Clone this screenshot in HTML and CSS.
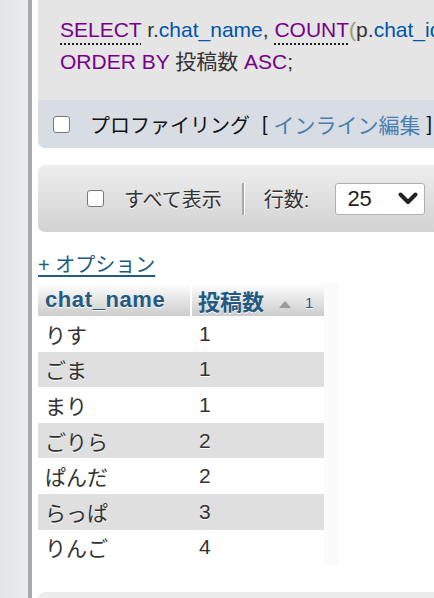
FILE: index.html
```html
<!DOCTYPE html>
<html lang="ja">
<head>
<meta charset="utf-8">
<title>phpMyAdmin</title>
<link rel="stylesheet" href="styles.css">
</head>
<body>
<div class="page">
  <div class="sidebar"></div>
  <div class="divider"></div>
  <div class="main">
    <div class="sqlbox">
      <div class="code-line"><span class="kw dotted">SELECT</span> <span class="plain">r.</span><span class="var">chat_name</span><span class="plain">,</span> <span class="kw dotted">COUNT</span><span class="br">(</span><span class="plain">p.</span><span class="var">chat_id</span><span class="br">)</span> <span class="kw">AS</span> <span class="plain">投稿数</span></div>
      <div class="code-line"><span class="kw">ORDER BY</span> <span class="plain">投稿数</span> <span class="kw">ASC</span><span class="plain">;</span></div>
    </div>
    <div class="tools">
      <span class="checkbox"></span>
      <span class="tools-text">プロファイリング</span>
      <span class="bracket">[</span>
      <a class="tool-link">インライン編集</a>
      <span class="bracket">]</span>
    </div>
    <div class="navbar">
      <span class="checkbox"></span>
      <span class="nav-label">すべて表示</span>
      <span class="nav-sep"></span>
      <span class="nav-label">行数:</span>
      <div class="select">
        <span class="select-value">25</span>
        <svg class="chevron" width="20" height="13" viewBox="0 0 20 13"><path d="M2.5 2.5 L10 10 L17.5 2.5" fill="none" stroke="#222" stroke-width="4" stroke-linecap="round" stroke-linejoin="round"/></svg>
      </div>
    </div>
    <div class="options-row"><a class="options">+ オプション</a></div>
    <div class="results">
      <table class="data">
        <thead>
          <tr>
            <th class="col1">chat_name</th>
            <th class="col2">投稿数<svg class="sort" width="12" height="7" viewBox="0 0 12 7"><polygon points="6,0 12,7 0,7" fill="#9a9a9a"/></svg><span class="sort-num">1</span></th>
          </tr>
        </thead>
        <tbody>
          <tr class="odd"><td>りす</td><td>1</td></tr>
          <tr class="even"><td>ごま</td><td>1</td></tr>
          <tr class="odd"><td>まり</td><td>1</td></tr>
          <tr class="even"><td>ごりら</td><td>2</td></tr>
          <tr class="odd"><td>ぱんだ</td><td>2</td></tr>
          <tr class="even"><td>らっぱ</td><td>3</td></tr>
          <tr class="odd"><td>りんご</td><td>4</td></tr>
        </tbody>
      </table>
    </div>
    <div class="bottom-panel"></div>
  </div>
</div>
</body>
</html>
```
FILE: styles.css
```css
html, body {
  margin: 0;
  padding: 0;
  background: #fff;
}
body {
  font-family: "Liberation Sans", "Noto Sans CJK JP", sans-serif;
  color: #333;
  width: 434px;
  height: 598px;
  overflow: hidden;
}
.page {
  display: flex;
  height: 598px;
}
.sidebar {
  width: 28px;
  flex: none;
  background: linear-gradient(to right, #e4e5e6, #ebeced);
}
.divider {
  width: 4px;
  flex: none;
  background: #a9a9a9;
}
.main {
  flex: 1;
  min-width: 0;
  padding-left: 6px;
  overflow: hidden;
}
.sqlbox {
  background: #e5e5e5;
  height: 100px;
  box-sizing: border-box;
  padding: 14px 0 0 22px;
  width: 600px;
}
.code-line {
  font-size: 21px;
  line-height: 32px;
  white-space: nowrap;
}
.kw { color: #708; }
.var { color: #05a; }
.plain { color: #333; }
.br { color: #997; }
.dotted {
  text-decoration: underline dotted #222 2px;
  text-underline-offset: 6px;
}
.tools {
  background: #d8dde4;
  height: 48px;
  border-radius: 0 0 0 7px;
  display: flex;
  align-items: center;
  padding-left: 15px;
  width: 600px;
  white-space: nowrap;
}
.checkbox {
  display: inline-block;
  width: 15px;
  height: 15px;
  border: 1.5px solid #777;
  border-radius: 3px;
  background: #fff;
  flex: none;
}
.tools-text {
  font-size: 20px;
  color: #111;
  margin-left: 20px;
}
.bracket {
  font-size: 20px;
  color: #111;
  margin-left: 12px;
}
.tool-link {
  font-size: 21px;
  color: #4a7fb0;
  margin-left: 6px;
}
.tool-link + .bracket {
  margin-left: 6px;
}
.navbar {
  margin-top: 17px;
  height: 67px;
  border-radius: 7px;
  background: linear-gradient(#eeeeee, #d2d2d2);
  display: flex;
  align-items: center;
  padding-left: 49px;
  width: 600px;
  box-sizing: border-box;
  white-space: nowrap;
}
.nav-label {
  font-size: 20px;
  color: #333;
  text-shadow: 0 1px 0 #fff;
  margin-left: 20px;
}
.nav-sep {
  width: 2px;
  height: 32px;
  background: #a8a8a8;
  box-shadow: 1px 0 0 #fff;
  margin-left: 20px;
}
.select {
  margin-left: 26px;
  width: 90px;
  height: 32px;
  box-sizing: border-box;
  background: #fff;
  border: 1px solid #b0b0b0;
  border-radius: 3px;
  display: flex;
  align-items: center;
  justify-content: space-between;
  padding: 0 6px 0 11px;
}
.select-value {
  font-size: 22px;
  color: #222;
}
.options-row {
  margin-top: 19px;
  line-height: 28px;
  height: 28px;
}
.options {
  font-size: 20px;
  color: #235a81;
  text-decoration: underline;
  text-underline-offset: 3px;
}
.results {
  margin-top: 4px;
  background: #fbfbfb;
  width: 300px;
}
.data {
  border-collapse: collapse;
  width: 286px;
}
.data th {
  background: linear-gradient(#ffffff, #cccccc);
  color: #235a81;
  font-weight: bold;
  font-size: 22px;
  text-align: left;
  height: 33px;
  padding: 0 7px;
  text-shadow: 0 1px 0 #fff;
  white-space: nowrap;
}
.data th.col1 {
  width: 138px;
  letter-spacing: 0.6px;
}
.data th.col2 {
  border-left: 2px solid #fff;
  padding-left: 6px;
}
.sort {
  margin-left: 15px;
  vertical-align: 2px;
}
.sort-num {
  font-size: 15px;
  font-weight: normal;
  margin-left: 14px;
  vertical-align: 2px;
}
.data td {
  font-size: 21px;
  color: #333;
  height: 35.6px;
  padding: 0 7px;
  text-shadow: 0 1px 0 #fff;
}
.data td + td {
  padding-left: 8px;
}
.data tr.odd td { background: #fff; }
.data tr.even td { background: #dfdfdf; }
.bottom-panel {
  margin-top: 27px;
  height: 40px;
  background: #ececec;
  border-radius: 7px 0 0 0;
}
```
